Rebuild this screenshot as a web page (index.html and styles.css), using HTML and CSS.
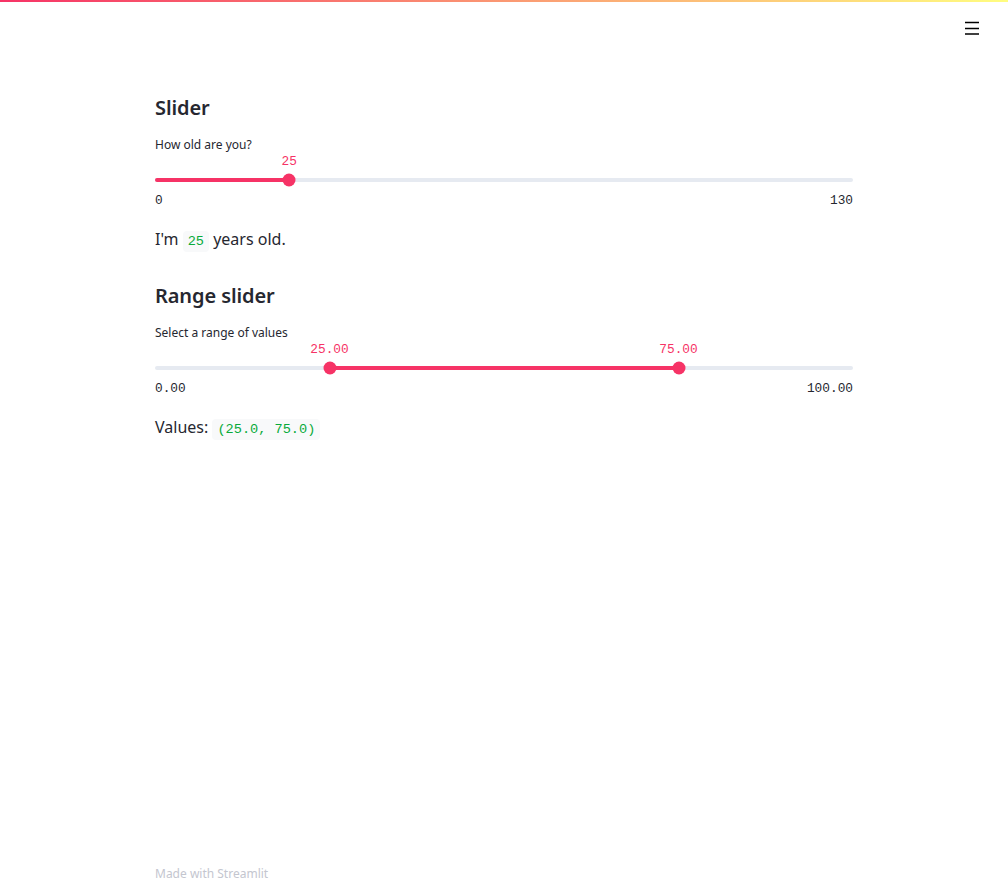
FILE: index.html
```html
<!DOCTYPE html>
<html>
<head>
<meta charset="utf-8">
<link rel="stylesheet" href="styles.css">
</head>
<body>
<div class="decoration"></div>
<header class="toolbar">
  <button class="menu" aria-label="Menu">
    <svg width="14" height="14" viewBox="0 0 14 14"><path d="M0 1.5H14M0 7.5H14M0 13H14" stroke="#000" stroke-width="1.6" fill="none"/></svg>
  </button>
</header>
<main class="main">
  <section class="block">
    <h2 class="heading">Slider</h2>
    <div class="label">How old are you?</div>
    <div class="slider">
      <div class="values">
        <span class="thumb-value" style="left:19.23%">25</span>
      </div>
      <div class="track-row">
        <div class="track">
          <div class="fill" style="left:0;width:19.23%"></div>
          <span class="thumb" style="left:19.23%"></span>
        </div>
      </div>
      <div class="minmax"><span>0</span><span>130</span></div>
    </div>
    <p class="text">I'm <code class="code">25</code> years old.</p>
  </section>
  <section class="block second">
    <h2 class="heading">Range slider</h2>
    <div class="label">Select a range of values</div>
    <div class="slider">
      <div class="values">
        <span class="thumb-value" style="left:25%">25.00</span>
        <span class="thumb-value" style="left:75%">75.00</span>
      </div>
      <div class="track-row">
        <div class="track">
          <div class="fill" style="left:25%;width:50%"></div>
          <span class="thumb" style="left:25%"></span>
          <span class="thumb" style="left:75%"></span>
        </div>
      </div>
      <div class="minmax"><span>0.00</span><span>100.00</span></div>
    </div>
    <p class="text">Values: <code class="code">(25.0, 75.0)</code></p>
  </section>
</main>
<footer class="footer">Made with <a class="footer-link">Streamlit</a></footer>
</body>
</html>
```
FILE: styles.css
```css
* { box-sizing: border-box; }
html, body { margin: 0; padding: 0; }
body {
  min-height: 100vh;
  display: flex;
  flex-direction: column;
  font-family: "Noto Sans", "Open Sans", sans-serif;
  color: #262730;
  background: #fff;
}
.decoration {
  height: 2px;
  background: linear-gradient(90deg, #f63366, #fffd80);
  flex: none;
}
.toolbar {
  height: 92px;
  display: flex;
  justify-content: flex-end;
  align-items: flex-start;
  padding: 19px 29px 0 0;
  flex: none;
}
.menu {
  border: 0;
  background: none;
  padding: 0;
  width: 14px;
  height: 14px;
  display: block;
}
.menu svg { display: block; }
.main {
  flex: 1;
  width: 698px;
  margin: 0 auto;
}
.block { display: flex; flex-direction: column; }
.second { margin-top: 31px; }
.heading {
  margin: 0;
  font-size: 20px;
  line-height: 28px;
  height: 28px;
  font-weight: 600;
  letter-spacing: -0.1px;
}
.label {
  margin-top: 15px;
  font-size: 12px;
  line-height: 16px;
  height: 16px;
}
.slider { display: flex; flex-direction: column; }
.values {
  margin-top: 1px;
  height: 16px;
  position: relative;
}
.thumb-value {
  position: absolute;
  top: 0;
  transform: translateX(-50%);
  font-family: "Liberation Mono", "DejaVu Sans Mono", monospace;
  font-size: 12.8px;
  line-height: 16px;
  color: #f63366;
}
.track-row {
  margin-top: 3px;
  height: 14px;
  display: flex;
  align-items: center;
}
.track {
  position: relative;
  width: 100%;
  height: 4px;
  border-radius: 2px;
  background: #e6eaf1;
}
.fill {
  position: absolute;
  top: 0;
  height: 4px;
  background: #f63366;
  border-radius: 2px;
}
.thumb {
  position: absolute;
  top: 50%;
  width: 13px;
  height: 13px;
  border-radius: 50%;
  background: #f63366;
  transform: translate(-50%, -50%);
}
.minmax {
  margin-top: 6px;
  height: 16px;
  display: flex;
  justify-content: space-between;
  font-family: "Liberation Mono", "DejaVu Sans Mono", monospace;
  font-size: 12.8px;
  line-height: 16px;
  color: #262730;
}
.text {
  margin: 18px 0 0;
  font-size: 16px;
  line-height: 24px;
  height: 24px;
}
.code {
  font-family: "Liberation Mono", "DejaVu Sans Mono", monospace;
  font-size: 13.6px;
  color: #09ab3b;
  background: #f8f9fa;
  padding: 3px 5px;
  border-radius: 4px;
}
.footer {
  width: 698px;
  margin: 0 auto;
  padding-bottom: 10px;
  font-size: 12px;
  line-height: 16px;
  color: #c4c6cf;
}
.footer-link { color: #c4c6cf; }
```
